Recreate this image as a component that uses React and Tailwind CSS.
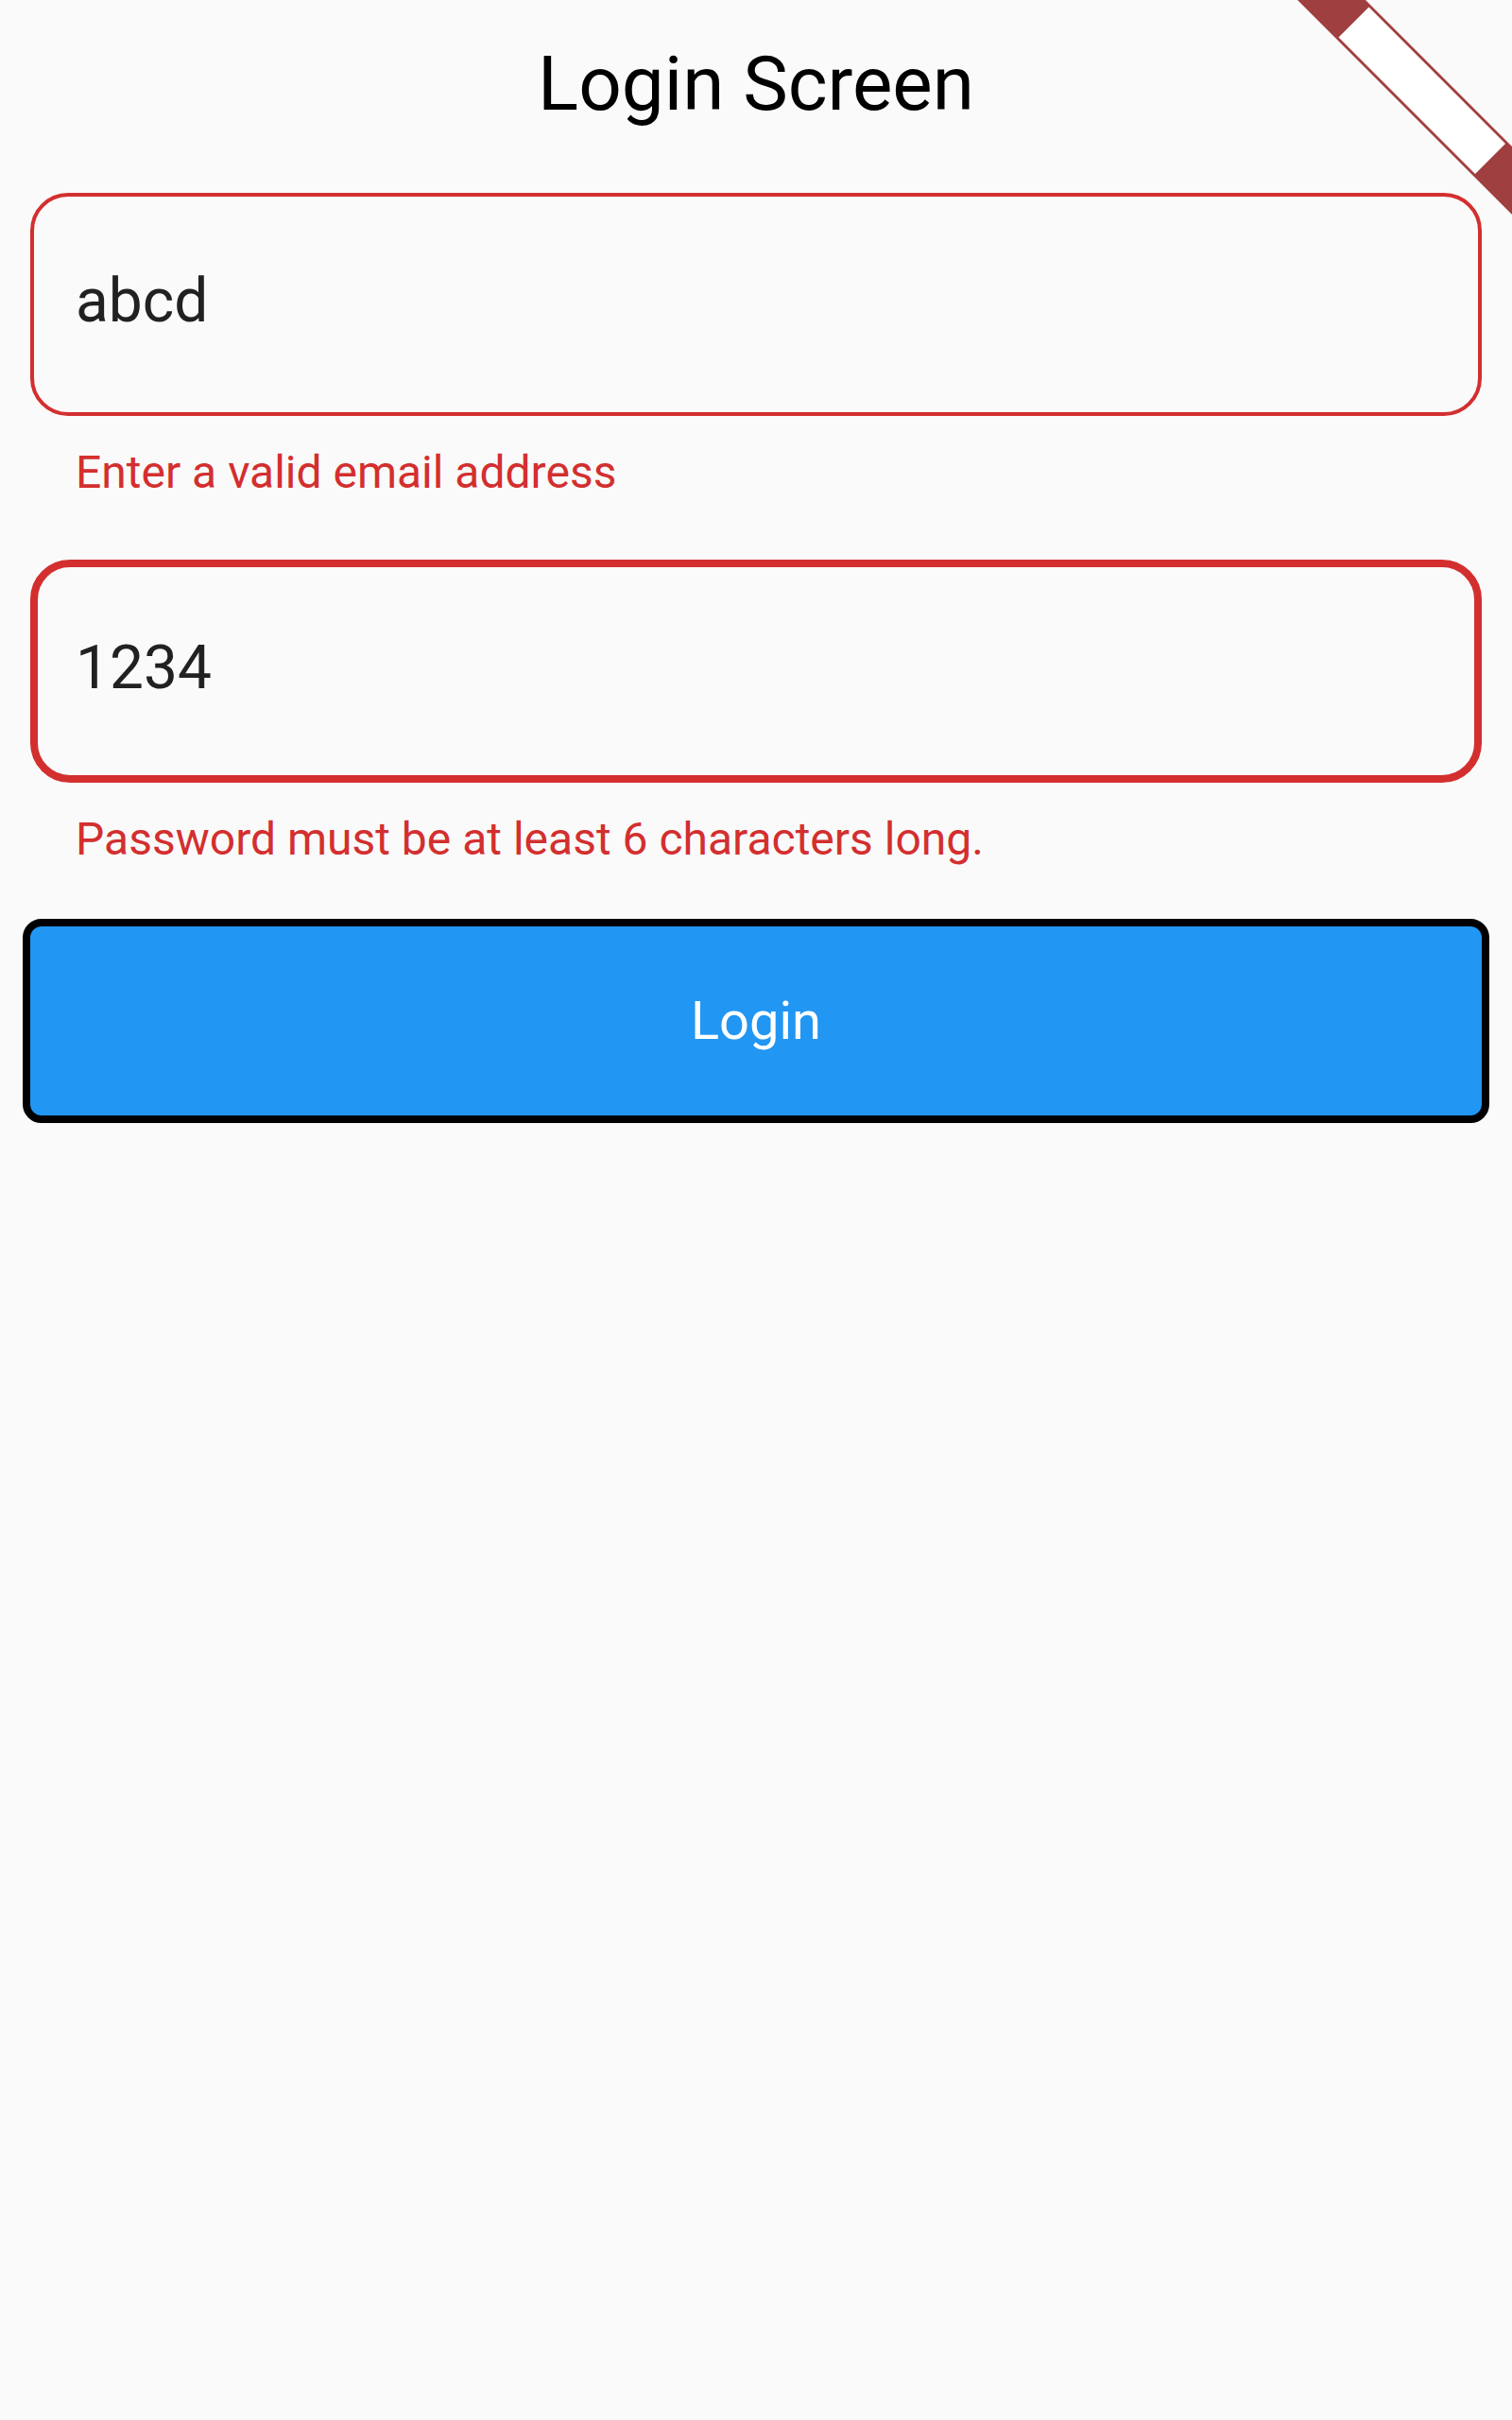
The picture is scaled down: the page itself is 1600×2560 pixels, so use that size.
import React from 'react';

function DebugBanner() {
  return (
    <svg className="absolute top-0 right-0" width="230" height="230" viewBox="0 0 230 230">
      <polygon points="3,0 75,0 230,155 230,227" fill="#a03f3f" />
      <polygon points="46.5,39.5 78.5,7.5 223,152 191,184" fill="#ffffff" />
    </svg>
  );
}

function Field({ value, error, focused }) {
  return (
    <div>
      <div
        className={
          focused
            ? 'h-[236px] border-[8px] border-[#d32f2f] rounded-[42px] pl-[40px] pt-[69px]'
            : 'h-[236px] border-[4px] border-[#d32f2f] rounded-[40px] pl-[44px] pt-[73px]'
        }
      >
        <div className="text-[64px] leading-[75px] text-[#212121]">{value}</div>
      </div>
      <div className="mt-[32px] pl-[48px] text-[48px] leading-[56px] text-[#d32f2f]">
        {error}
      </div>
    </div>
  );
}

export default function App() {
  return (
    <div className="relative min-h-[2560px] bg-[#fafafa] font-['Roboto',sans-serif] overflow-hidden">
      <div className="px-[32px] pt-[42px]">
        <h1 className="h-[94px] leading-[94px] text-[80px] text-black text-center">Login Screen</h1>

        <div className="mt-[68px]">
          <Field value="abcd" error="Enter a valid email address" />
        </div>

        <div className="mt-[64px]">
          <Field value="1234" error="Password must be at least 6 characters long." focused />
        </div>

        <button className="mt-[56px] -mx-[8px] w-[1552px] h-[216px] bg-[#2196f3] border-[8px] border-black rounded-[20px] flex items-center justify-center text-white text-[56px]">
          Login
        </button>
      </div>
      <DebugBanner />
    </div>
  );
}
